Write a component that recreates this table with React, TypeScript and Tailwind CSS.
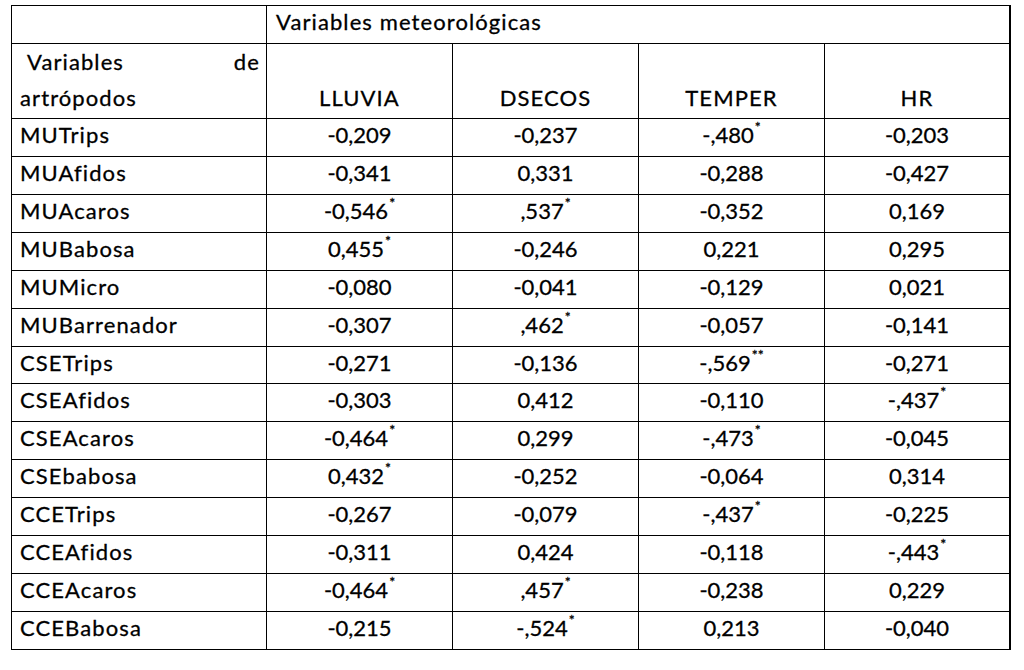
import React from "react";

type Cell = { v: string; s?: string };

const rows: [string, Cell[]][] = [
  ["MUTrips", [{ v: "-0,209" }, { v: "-0,237" }, { v: "-,480", s: "*" }, { v: "-0,203" }]],
  ["MUAfidos", [{ v: "-0,341" }, { v: "0,331" }, { v: "-0,288" }, { v: "-0,427" }]],
  ["MUAcaros", [{ v: "-0,546", s: "*" }, { v: ",537", s: "*" }, { v: "-0,352" }, { v: "0,169" }]],
  ["MUBabosa", [{ v: "0,455", s: "*" }, { v: "-0,246" }, { v: "0,221" }, { v: "0,295" }]],
  ["MUMicro", [{ v: "-0,080" }, { v: "-0,041" }, { v: "-0,129" }, { v: "0,021" }]],
  ["MUBarrenador", [{ v: "-0,307" }, { v: ",462", s: "*" }, { v: "-0,057" }, { v: "-0,141" }]],
  ["CSETrips", [{ v: "-0,271" }, { v: "-0,136" }, { v: "-,569", s: "**" }, { v: "-0,271" }]],
  ["CSEAfidos", [{ v: "-0,303" }, { v: "0,412" }, { v: "-0,110" }, { v: "-,437", s: "*" }]],
  ["CSEAcaros", [{ v: "-0,464", s: "*" }, { v: "0,299" }, { v: "-,473", s: "*" }, { v: "-0,045" }]],
  ["CSEbabosa", [{ v: "0,432", s: "*" }, { v: "-0,252" }, { v: "-0,064" }, { v: "0,314" }]],
  ["CCETrips", [{ v: "-0,267" }, { v: "-0,079" }, { v: "-,437", s: "*" }, { v: "-0,225" }]],
  ["CCEAfidos", [{ v: "-0,311" }, { v: "0,424" }, { v: "-0,118" }, { v: "-,443", s: "*" }]],
  ["CCEAcaros", [{ v: "-0,464", s: "*" }, { v: ",457", s: "*" }, { v: "-0,238" }, { v: "0,229" }]],
  ["CCEBabosa", [{ v: "-0,215" }, { v: "-,524", s: "*" }, { v: "0,213" }, { v: "-0,040" }]],
];

function Val({ c }: { c: Cell }) {
  return (
    <span className="whitespace-nowrap tracking-normal">
      {c.v}
      {c.s && (
        <span className="relative -top-[11px] ml-[1px] text-[14px] leading-none">{c.s}</span>
      )}
    </span>
  );
}

export default function App() {
  return (
    <div className="w-[1024px] h-[670px] bg-white pl-[11px] pt-[5px] font-[Lato,sans-serif] text-[22px] tracking-[1.1px] text-black [-webkit-text-stroke:0.3px_#000]">
      <div className="grid w-max grid-cols-[255px_186px_186px_186px_186px] border-l border-t border-black">
        {/* header row 1 */}
        <div className="h-[38px] border-r border-b border-black" />
        <div className="col-span-4 h-[38px] border-r-2 border-b border-black pl-[9px] leading-[31px]">
          Variables meteorológicas
        </div>
        {/* header row 2 */}
        <div className="flex h-[75px] flex-col border-r border-b border-black pl-[8px] pr-[6px] leading-[36px]">
          <div className="flex justify-between pl-[7px]">
            <span>Variables</span>
            <span>de</span>
          </div>
          <div>artrópodos</div>
        </div>
        {["LLUVIA", "DSECOS", "TEMPER", "HR"].map((h, i) => (
          <div
            key={h}
            className={`flex h-[75px] items-end justify-center border-b border-black pb-[2px] leading-[36px] ${
              i === 3 ? "border-r-2" : "border-r"
            }`}
          >
            {h}
          </div>
        ))}
        {rows.map(([label, cells], r) => (
          <React.Fragment key={label}>
            <div
              className={`border-r border-b border-black pl-[8px] leading-[31px] ${
                r === 6 ? "h-[37px]" : "h-[38px]"
              }`}
            >
              {label}
            </div>
            {cells.map((c, i) => (
              <div
                key={i}
                className={`border-b border-black text-center leading-[31px] ${
                  i === 3 ? "border-r-2" : "border-r"
                } ${r === 6 ? "h-[37px]" : "h-[38px]"}`}
              >
                <Val c={c} />
              </div>
            ))}
          </React.Fragment>
        ))}
      </div>
    </div>
  );
}
